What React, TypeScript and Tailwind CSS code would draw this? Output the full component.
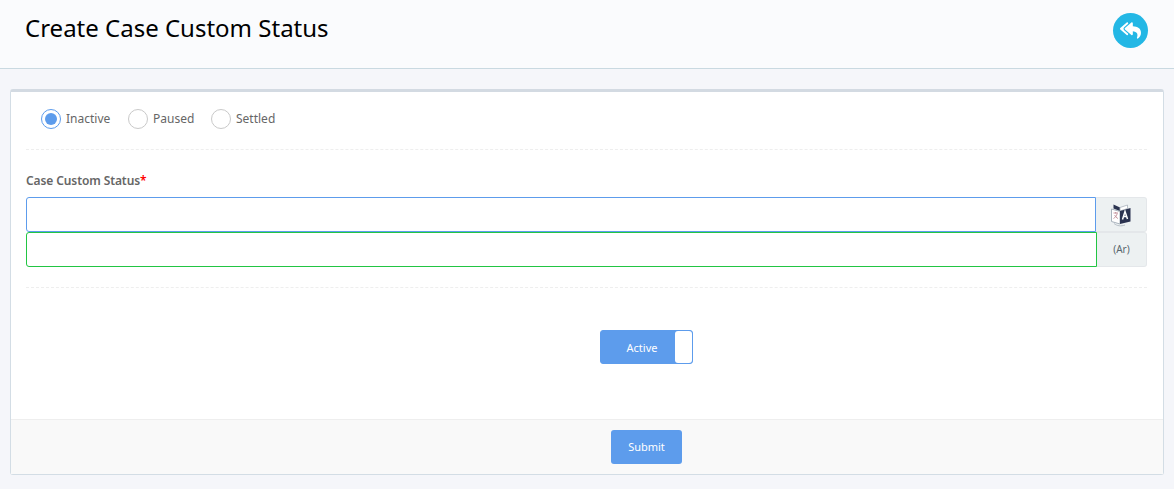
import { FaReplyAll } from 'react-icons/fa'

function Radio({ label, checked, textWidth }: { label: string; checked?: boolean; textWidth: string }) {
  return (
    <label className="flex items-center gap-[5px]">
      <span
        className={`flex h-[20px] w-[20px] items-center justify-center rounded-full border bg-white ${
          checked ? 'border-[#5d9cec]' : 'border-[#c9c9c9]'
        }`}
      >
        {checked && <span className="h-[12px] w-[12px] rounded-full bg-[#5d9cec]" />}
      </span>
      <span className={`${textWidth} whitespace-nowrap text-[12px] text-[#666]`}>{label}</span>
    </label>
  )
}

function TranslateIcon() {
  return (
    <svg width="22" height="24" viewBox="0 0 22 24">
      <path d="M1.5 6 L10 8.5 V21 L1.5 18.5 Z" fill="#fff" stroke="#a9b3bd" strokeWidth="1" />
      <path d="M3.5 1.5 L10 4.5 V8 L3.5 5.5 Z" fill="#2b3350" />
      <path d="M10 4.5 L17.5 2 V5.5 L10 8 Z" fill="#fff" stroke="#a9b3bd" strokeWidth="0.8" />
      <path d="M10 8 L20.5 5 V18.5 L10 21 Z" fill="#2b3350" />
      <path d="M3.5 10 H8 M5.7 9 V10.5 M7.2 10.5 C6.7 13 5.2 14.5 3.5 15.5 M4.7 12 C5.2 13.5 6.7 15 8 15.5" fill="none" stroke="#b9808c" strokeWidth="0.8" />
      <path d="M12.5 16.5 L15 8.5 L17.5 16 M13.4 13.6 H16.6" fill="none" stroke="#fff" strokeWidth="1.5" />
      <path d="M4 20.5 C7 23 11 23.5 15 22" fill="none" stroke="#a9b3bd" strokeWidth="0.8" />
    </svg>
  )
}

export default function App() {
  return (
    <div className="flex h-[489px] flex-col overflow-hidden bg-[#f5f6fa] font-['Noto_Sans',sans-serif]">
      <div className="flex h-[69px] shrink-0 items-start justify-between border-b border-[#c9d9e1] bg-[#fafbfd] pl-[25px] pr-[26px]">
        <h1 className="mt-[11px] text-[24px] leading-[34px] text-black">Create Case Custom Status</h1>
        <button className="mt-[13px] flex h-[35px] w-[35px] items-center justify-center rounded-full bg-[#23b7e5] text-white">
          <FaReplyAll size={21} />
        </button>
      </div>

      <div className="mx-[10px] mt-[20px] flex h-[386px] w-[1154px] flex-col rounded-[3px] border border-t-[3px] border-[#d3dde5] border-t-[#d3dae2] bg-white">
        <div className="flex-1 pl-[15px] pr-[16px]">
          <div className="flex h-[58px] items-center gap-[18px] border-b border-dashed border-[#eeeeee] pb-[3px] pl-[15px]">
            <Radio label="Inactive" checked textWidth="w-[44px]" />
            <Radio label="Paused" textWidth="w-[40px]" />
            <Radio label="Settled" textWidth="w-[40px]" />
          </div>

          <div className="mt-[22px] text-[12px] font-semibold leading-[18px] tracking-[-0.1px] text-[#666]">
            Case Custom Status<span className="text-[#ff0000]">*</span>
          </div>

          <div className="mt-[7px] border-b border-dashed border-[#eeeeee] pb-[20px]">
            <div className="flex h-[35px]">
              <input className="h-full flex-1 rounded-l-[3px] border border-[#5d9cec] bg-white outline-none" />
              <span className="flex w-[51px] items-center justify-center rounded-r-[3px] border border-l-0 border-[#e4e7ea] bg-[#edf1f2]">
                <TranslateIcon />
              </span>
            </div>
            <div className="flex h-[35px]">
              <input className="h-full flex-1 rounded-l-[3px] border border-[#22c543] bg-white outline-none" />
              <span className="flex w-[50px] items-center justify-center rounded-r-[3px] border border-l-0 border-[#e4e7ea] bg-[#edf1f2] text-[10px] text-[#58666e]">
                (Ar)
              </span>
            </div>
          </div>

          <div className="mt-[42px] flex justify-center pl-[120px]">
            <div className="flex h-[34px] w-[93px] items-center rounded-[3px] border border-[#5d9cec] bg-[#5d9cec]">
              <span className="flex-1 pl-[8px] pt-[2px] text-center text-[11px] text-white">Active</span>
              <span className="h-[32px] w-[17px] rounded-[3px] bg-white" />
            </div>
          </div>
        </div>

        <div className="flex h-[55px] shrink-0 items-center justify-center border-t border-[#eeeeee] bg-[#f9f9f9] pl-[119px]">
          <button className="h-[34px] w-[71px] rounded-[3px] bg-[#5d9cec] text-[11px] text-white">Submit</button>
        </div>
      </div>
    </div>
  )
}
